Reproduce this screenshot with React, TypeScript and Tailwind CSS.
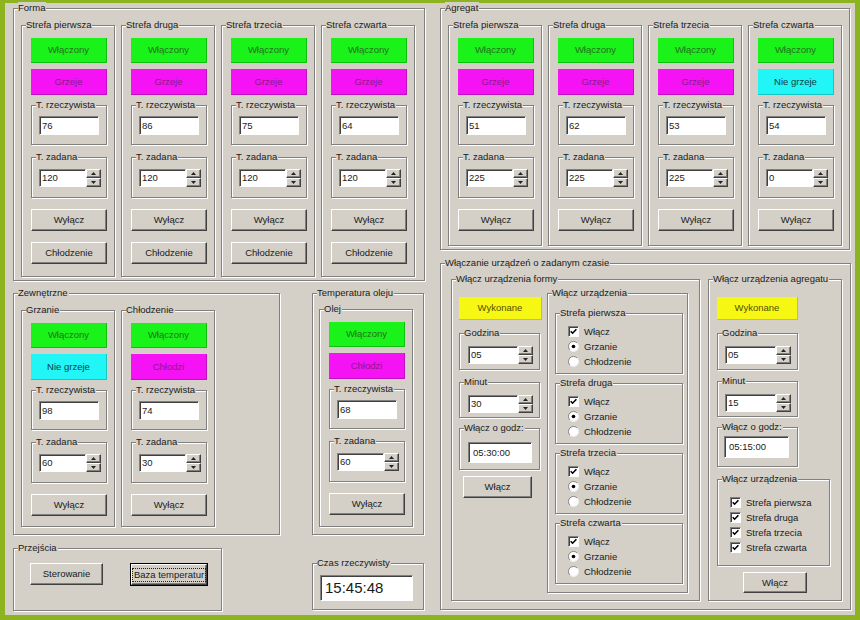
import type { ReactElement, ReactNode } from "react";

const raised =
  "border border-t-white border-l-white border-r-[#404040] border-b-[#404040] shadow-[inset_-1px_-1px_0_#808080]";
const sunken =
  "border border-t-[#808080] border-l-[#808080] border-r-white border-b-white shadow-[inset_1px_1px_0_#404040]";

type Kind = "on" | "heat" | "idle" | "done";

const kindStyle: Record<Kind, string> = {
  on: "bg-[#19f319] text-[#25701f] border-r-[#10c010] border-b-[#10c010]",
  heat: "bg-[#f512f5] text-[#8a1a8a] border-r-[#c010c0] border-b-[#c010c0]",
  idle: "bg-[#22f5f5] text-[#103c48] border-r-[#18c4c4] border-b-[#18c4c4]",
  done: "bg-[#f7f714] text-[#555000] border-r-[#c8c810] border-b-[#c8c810]",
};

function Group({
  title,
  className = "",
  children,
}: {
  title: string;
  className?: string;
  children?: ReactNode;
}): ReactElement {
  return (
    <div
      className={`relative shrink-0 border border-[#808080] shadow-[inset_1px_1px_0_#fff,1px_1px_0_#fff] ${className}`}
    >
      <span className="absolute -top-[7px] left-[4px] whitespace-nowrap bg-[#d4d0c8] pr-px leading-[12px]">
        {title}
      </span>
      {children}
    </div>
  );
}

function Status({ kind, className = "", children }: { kind: Kind; className?: string; children: ReactNode }): ReactElement {
  return (
    <div className={`flex shrink-0 items-center justify-center border-r border-b ${kindStyle[kind]} ${className}`}>
      {children}
    </div>
  );
}

function Btn({ className = "", children }: { className?: string; children: ReactNode }): ReactElement {
  return (
    <button
      type="button"
      className={`flex shrink-0 items-center justify-center whitespace-nowrap bg-[#d4d0c8] ${raised} ${className}`}
    >
      {children}
    </button>
  );
}

function Field({ className = "", children }: { className?: string; children: ReactNode }): ReactElement {
  return <div className={`flex shrink-0 items-center bg-white pl-[2px] ${sunken} ${className}`}>{children}</div>;
}

function SpinBtn({ up }: { up?: boolean }): ReactElement {
  return (
    <div className={`flex h-[9px] w-[15px] items-center justify-center bg-[#d4d0c8] ${raised}`}>
      <svg width="5" height="3" viewBox="0 0 5 3">
        <path d={up ? "M0 3L2.5 0L5 3Z" : "M0 0L5 0L2.5 3Z"} fill="#222" />
      </svg>
    </div>
  );
}

function Spinner({ value, width }: { value: string; width: string }): ReactElement {
  return (
    <div className="flex">
      <Field className={`h-[18px] ${width}`}>{value}</Field>
      <div className="flex flex-col">
        <SpinBtn up />
        <SpinBtn />
      </div>
    </div>
  );
}

function Check({ label }: { label: string }): ReactElement {
  return (
    <div className="flex h-[15px] items-center gap-[5px]">
      <span className={`flex h-[11px] w-[11px] items-center justify-center bg-white ${sunken}`}>
        <svg width="7" height="7" viewBox="0 0 7 7">
          <path d="M0.7 3.2L2.6 5.2L6.4 1.2" stroke="#000" strokeWidth="1.6" fill="none" />
        </svg>
      </span>
      {label}
    </div>
  );
}

function Radio({ label, on }: { label: string; on?: boolean }): ReactElement {
  return (
    <div className="flex h-[15px] items-center gap-[5px]">
      <svg width="11" height="11" viewBox="0 0 12 12">
        <circle cx="6" cy="6" r="5.2" fill="#fff" />
        <path d="M2.1 9.9A5.5 5.5 0 0 1 9.9 2.1" stroke="#808080" strokeWidth="1" fill="none" />
        <path d="M9.9 2.1A5.5 5.5 0 0 1 2.1 9.9" stroke="#f4f4f4" strokeWidth="1" fill="none" />
        {on && <circle cx="6" cy="6" r="2" fill="#000" />}
      </svg>
      {label}
    </div>
  );
}

type ZoneData = { title: string; kind: Kind; text: string; real: string; set: string };

function Zone({ zone, cool, height }: { zone: ZoneData; cool?: boolean; height: string }): ReactElement {
  return (
    <Group title={zone.title} className={`flex w-[94px] flex-col pt-[12px] pr-[7px] pl-[9px] ${height}`}>
      <Status kind="on" className="h-[25px]">
        Włączony
      </Status>
      <Status kind={zone.kind} className="mt-[6px] h-[26px]">
        {zone.text}
      </Status>
      <Group title="T. rzeczywista" className="mt-[10px] h-[40px] pt-[10px] pl-[7px]">
        <Field className="h-[19px] w-[60px]">{zone.real}</Field>
      </Group>
      <Group title="T. zadana" className="mt-[12px] h-[41px] pt-[11px] pl-[7px]">
        <Spinner value={zone.set} width="w-[47px]" />
      </Group>
      <Btn className="mt-[11px] h-[22px]">Wyłącz</Btn>
      {cool && <Btn className="mt-[11px] h-[22px]">Chłodzenie</Btn>}
    </Group>
  );
}

const forma: ZoneData[] = [
  { title: "Strefa pierwsza", kind: "heat", text: "Grzeje", real: "76", set: "120" },
  { title: "Strefa druga", kind: "heat", text: "Grzeje", real: "86", set: "120" },
  { title: "Strefa trzecia", kind: "heat", text: "Grzeje", real: "75", set: "120" },
  { title: "Strefa czwarta", kind: "heat", text: "Grzeje", real: "64", set: "120" },
];

const agregat: ZoneData[] = [
  { title: "Strefa pierwsza", kind: "heat", text: "Grzeje", real: "51", set: "225" },
  { title: "Strefa druga", kind: "heat", text: "Grzeje", real: "62", set: "225" },
  { title: "Strefa trzecia", kind: "heat", text: "Grzeje", real: "53", set: "225" },
  { title: "Strefa czwarta", kind: "idle", text: "Nie grzeje", real: "54", set: "0" },
];

const outside: ZoneData[] = [
  { title: "Grzanie", kind: "idle", text: "Nie grzeje", real: "98", set: "60" },
  { title: "Chłodzenie", kind: "heat", text: "Chłodzi", real: "74", set: "30" },
];

const oil: ZoneData = { title: "Olej", kind: "heat", text: "Chłodzi", real: "68", set: "60" };

const strefy = ["Strefa pierwsza", "Strefa druga", "Strefa trzecia", "Strefa czwarta"];

export default function App(): ReactElement {
  return (
    <div className="h-[620px] w-[860px] bg-[#8db41e] pt-[3px] pr-[5px] pb-[5px] pl-[5px] font-['Liberation_Sans',Arial,sans-serif] text-[9.5px] leading-[12px] text-[#1a1a1a]">
      <div className="flex h-full gap-[15px] bg-[#d4d0c8] pt-[5px] pl-[8px]">
        {/* left column */}
        <div className="flex w-[412px] shrink-0 flex-col">
          <Group title="Forma" className="flex h-[273px] w-[412px] gap-[6px] pt-[16px] pl-[7px]">
            {forma.map((z) => (
              <Zone key={z.title} zone={z} cool height="h-[252px]" />
            ))}
          </Group>

          <div className="mt-[12px] flex gap-[32px]">
            <Group title="Zewnętrzne" className="flex h-[242px] w-[267px] gap-[6px] pt-[16px] pl-[7px]">
              {outside.map((z) => (
                <Zone key={z.title} zone={z} height="h-[217px]" />
              ))}
            </Group>
            <Group title="Temperatura oleju" className="h-[242px] w-[112px] pt-[15px] pl-[6px]">
              <Zone zone={oil} height="h-[218px]" />
            </Group>
          </div>

          <div className="mt-[13px] flex items-start gap-[90px]">
            <Group title="Przejścia" className="flex h-[63px] w-[209px] items-start gap-[27px] pt-[14px] pl-[16px]">
              <Btn className="h-[22px] w-[73px]">Sterowanie</Btn>
              <button
                type="button"
                className="flex h-[23px] w-[78px] shrink-0 border border-black bg-[#d4d0c8] p-0"
              >
                <span className={`flex h-full w-full items-center justify-center whitespace-nowrap ${raised}`}>
                  <span className="px-px outline-1 outline-dotted outline-[#222]">Baza temperatur</span>
                </span>
              </button>
            </Group>
            <Group title="Czas rzeczywisty" className="mt-[15px] h-[47px] w-[112px] pt-[11px] pl-[7px]">
              <Field className="h-[26px] w-[93px] pl-[4px] text-[15px] leading-[18px]">15:45:48</Field>
            </Group>
          </div>
        </div>

        {/* right column */}
        <div className="flex w-[411px] shrink-0 flex-col">
          <Group title="Agregat" className="flex h-[242px] w-[410px] gap-[6px] pt-[16px] pl-[7px]">
            {agregat.map((z) => (
              <Zone key={z.title} zone={z} height="h-[221px]" />
            ))}
          </Group>

          <Group
            title="Włączanie urządzeń o zadanym czasie"
            className="mt-[13px] flex h-[347px] w-[411px] gap-[8px] pt-[15px] pl-[10px]"
          >
            <Group title="Włącz urządzenia formy" className="flex h-[322px] w-[249px] gap-[5px] pt-[13px] pl-[7px]">
              <div className="flex w-[83px] flex-col pt-[4px]">
                <Status kind="done" className="h-[23px] w-[83px]">
                  Wykonane
                </Status>
                <Group title="Godzina" className="mt-[13px] h-[37px] w-[81px] pt-[12px] pl-[8px]">
                  <Spinner value="05" width="w-[50px]" />
                </Group>
                <Group title="Minut" className="mt-[12px] h-[36px] w-[81px] pt-[12px] pl-[8px]">
                  <Spinner value="30" width="w-[50px]" />
                </Group>
                <Group title="Włącz o godz:" className="mt-[10px] h-[42px] w-[81px] pt-[13px] pl-[8px]">
                  <Field className="h-[21px] w-[64px] pl-[4px]">05:30:00</Field>
                </Group>
                <Btn className="mt-[6px] ml-[4px] h-[22px] w-[69px]">Włącz</Btn>
              </div>
              <Group title="Włącz urządzenia" className="flex h-[300px] w-[141px] flex-col gap-[9px] pt-[19px] pl-[7px]">
                {strefy.map((s) => (
                  <Group key={s} title={s} className="h-[61px] w-[128px] pt-[10px] pl-[12px]">
                    <Check label="Włącz" />
                    <Radio label="Grzanie" on />
                    <Radio label="Chłodzenie" />
                  </Group>
                ))}
              </Group>
            </Group>

            <Group title="Włącz urządzenia agregatu" className="flex h-[322px] w-[134px] flex-col pt-[17px] pl-[8px]">
              <Status kind="done" className="h-[23px] w-[81px]">
                Wykonane
              </Status>
              <Group title="Godzina" className="mt-[13px] h-[37px] w-[81px] pt-[12px] pl-[7px]">
                <Spinner value="05" width="w-[51px]" />
              </Group>
              <Group title="Minut" className="mt-[11px] h-[36px] w-[81px] pt-[12px] pl-[7px]">
                <Spinner value="15" width="w-[51px]" />
              </Group>
              <Group title="Włącz o godz:" className="mt-[10px] h-[40px] w-[81px] pt-[8px] pl-[6px]">
                <Field className="h-[22px] w-[65px] pl-[4px]">05:15:00</Field>
              </Group>
              <Group title="Włącz urządzenia" className="mt-[12px] h-[87px] w-[113px] pt-[15px] pl-[12px]">
                {strefy.map((s) => (
                  <Check key={s} label={s} />
                ))}
              </Group>
              <Btn className="mt-[6px] ml-[26px] h-[21px] w-[64px]">Włącz</Btn>
            </Group>
          </Group>
        </div>
      </div>
    </div>
  );
}
